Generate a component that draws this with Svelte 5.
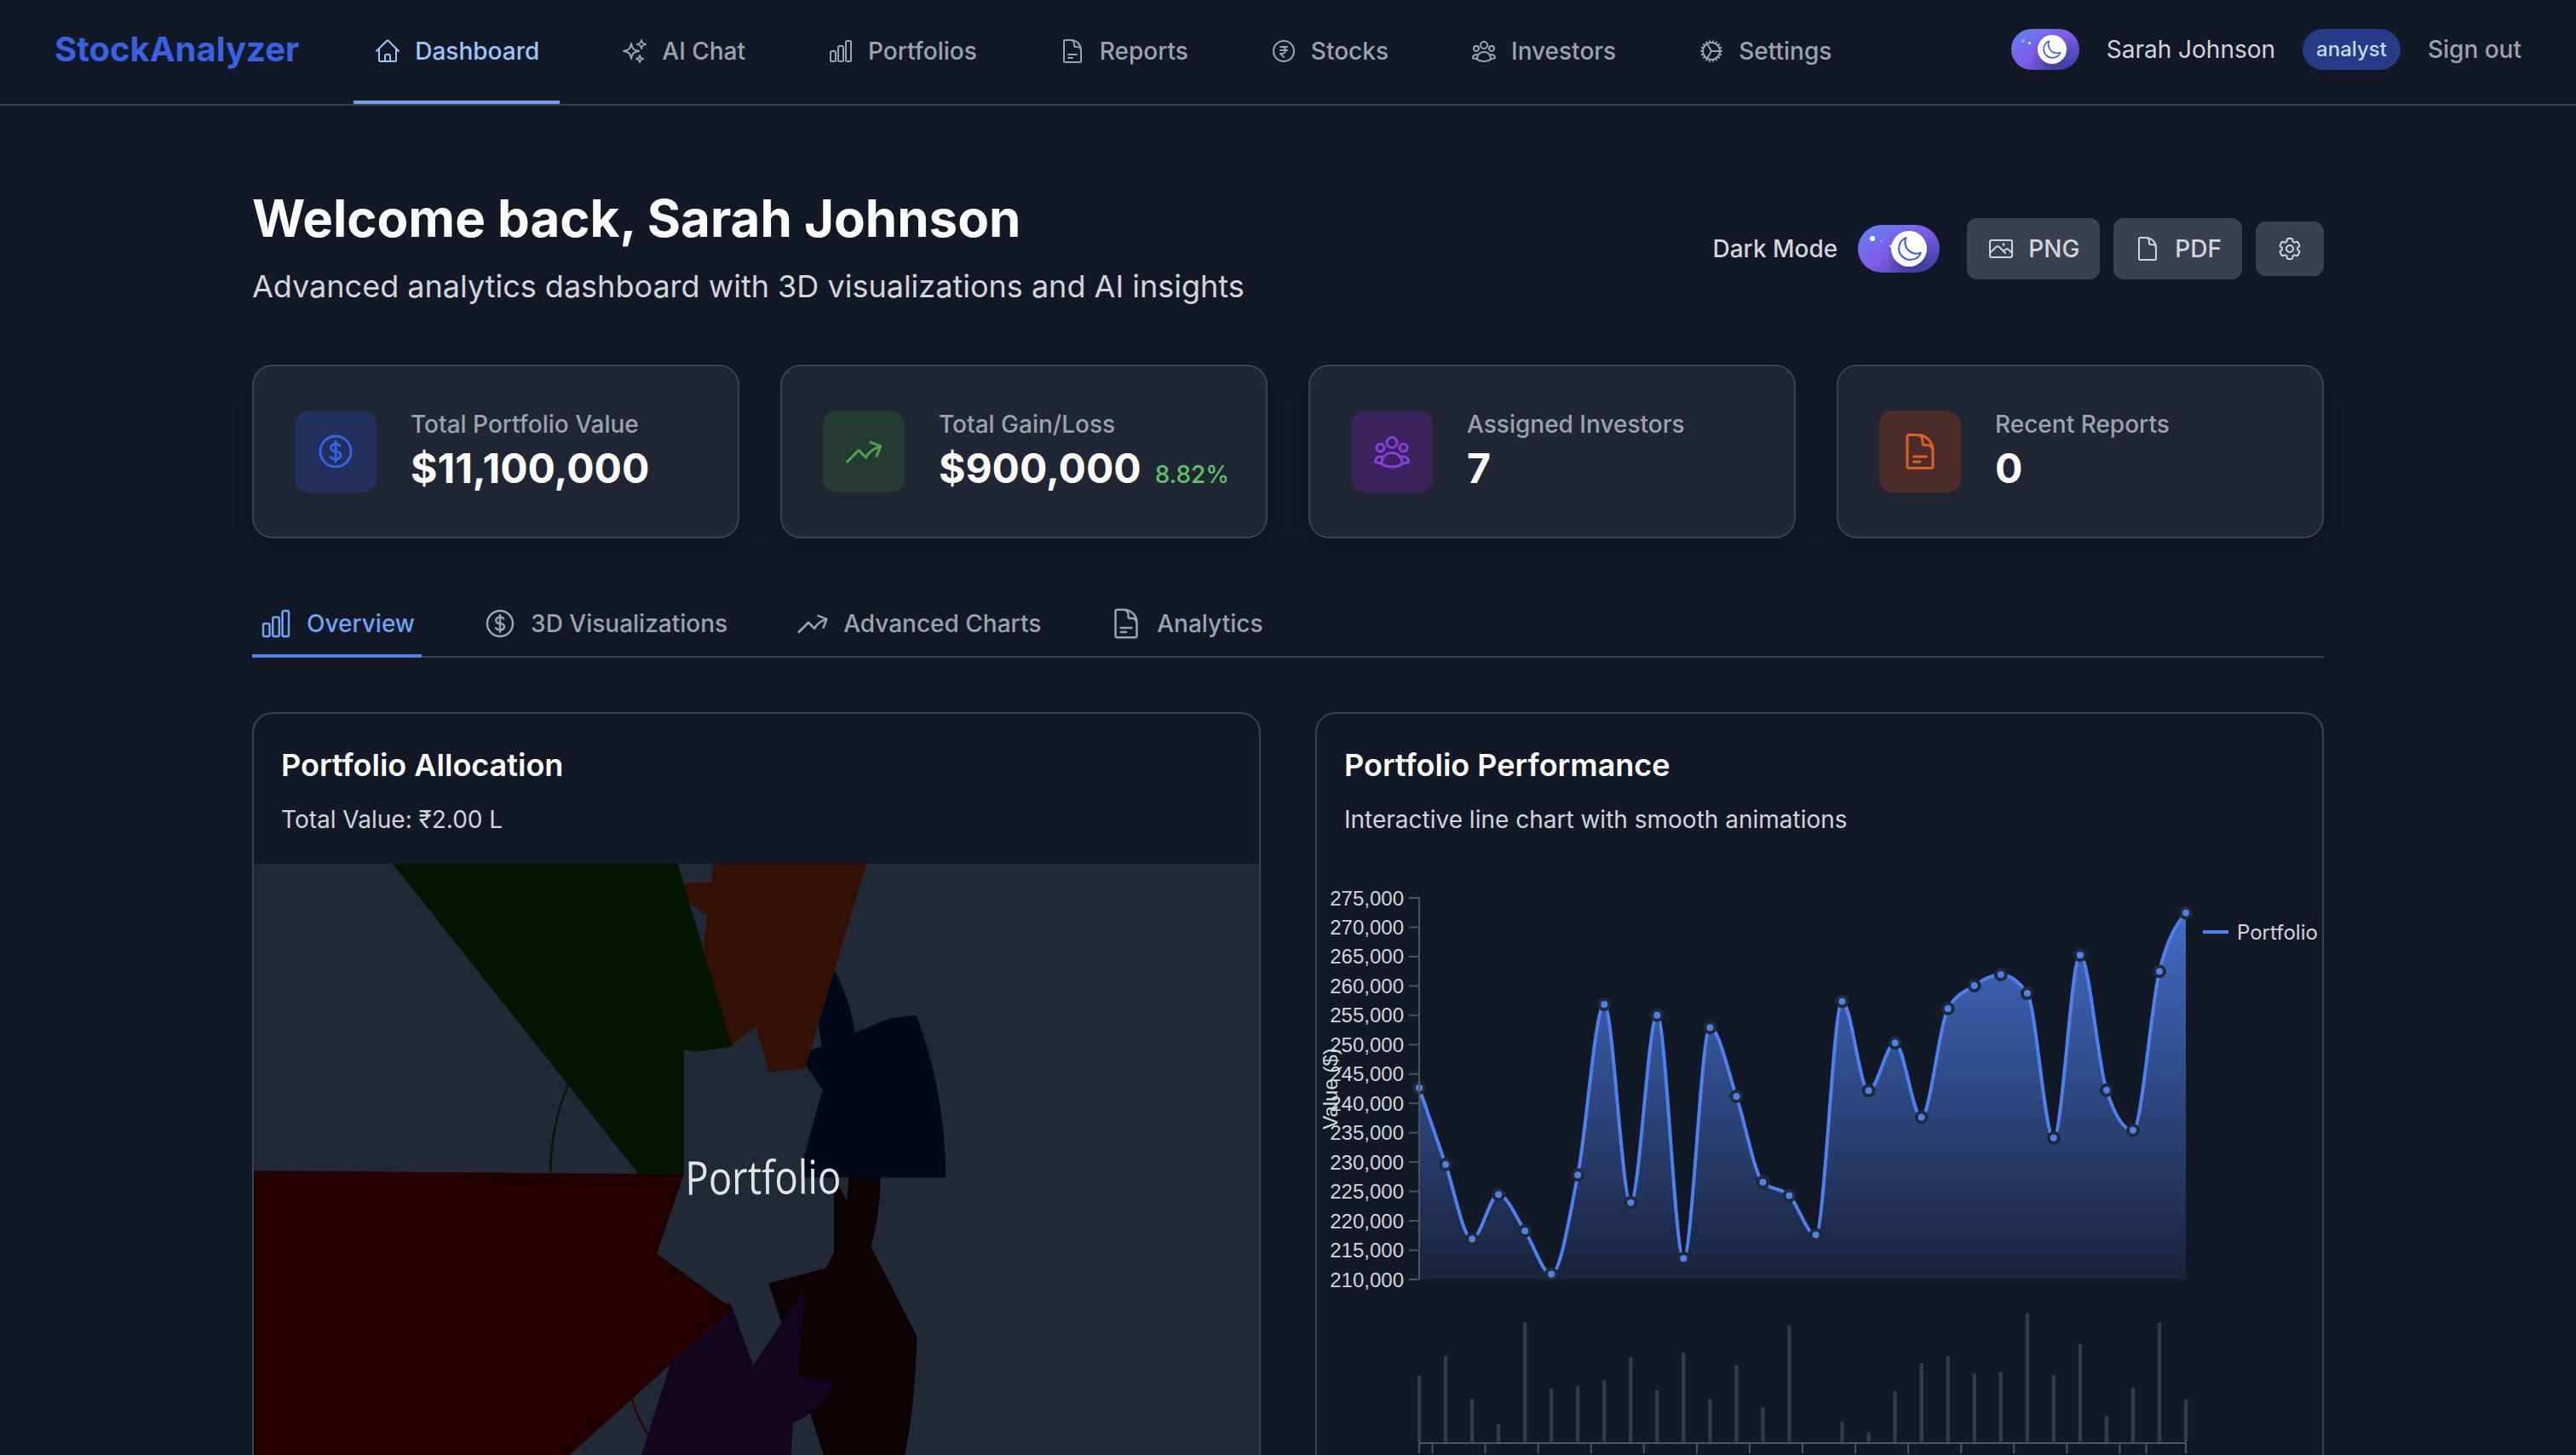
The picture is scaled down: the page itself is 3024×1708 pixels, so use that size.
<script>
  const paths = {
    home: 'm2.25 12 8.954-8.955c.44-.439 1.152-.439 1.591 0L21.75 12M4.5 9.75v10.125c0 .621.504 1.125 1.125 1.125H9.75v-4.875c0-.621.504-1.125 1.125-1.125h2.25c.621 0 1.125.504 1.125 1.125V21h4.125c.621 0 1.125-.504 1.125-1.125V9.75M8.25 21h8.25',
    sparkles: 'M9.813 15.904 9 18.75l-.813-2.846a4.5 4.5 0 0 0-3.09-3.09L2.25 12l2.846-.813a4.5 4.5 0 0 0 3.09-3.09L9 5.25l.813 2.846a4.5 4.5 0 0 0 3.09 3.09L15.75 12l-2.846.813a4.5 4.5 0 0 0-3.09 3.09ZM18.259 8.715 18 9.75l-.259-1.035a3.375 3.375 0 0 0-2.455-2.456L14.25 6l1.036-.259a3.375 3.375 0 0 0 2.455-2.456L18 2.25l.259 1.035a3.375 3.375 0 0 0 2.456 2.456L21.75 6l-1.035.259a3.375 3.375 0 0 0-2.456 2.456ZM16.894 20.567 16.5 21.75l-.394-1.183a2.25 2.25 0 0 0-1.423-1.423L13.5 18.75l1.183-.394a2.25 2.25 0 0 0 1.423-1.423l.394-1.183.394 1.183a2.25 2.25 0 0 0 1.423 1.423l1.183.394-1.183.394a2.25 2.25 0 0 0-1.423 1.423Z',
    bars: 'M3 13.125C3 12.504 3.504 12 4.125 12h2.25c.621 0 1.125.504 1.125 1.125v6.75C7.5 20.496 6.996 21 6.375 21h-2.25A1.125 1.125 0 0 1 3 19.875v-6.75ZM9.75 8.625c0-.621.504-1.125 1.125-1.125h2.25c.621 0 1.125.504 1.125 1.125v11.25c0 .621-.504 1.125-1.125 1.125h-2.25a1.125 1.125 0 0 1-1.125-1.125V8.625ZM16.5 4.125c0-.621.504-1.125 1.125-1.125h2.25C20.496 3 21 3.504 21 4.125v15.75c0 .621-.504 1.125-1.125 1.125h-2.25a1.125 1.125 0 0 1-1.125-1.125V4.125Z',
    docText: 'M19.5 14.25v-2.625a3.375 3.375 0 0 0-3.375-3.375h-1.5A1.125 1.125 0 0 1 13.5 7.125v-1.5a3.375 3.375 0 0 0-3.375-3.375H8.25m0 12.75h7.5m-7.5 3H12M10.5 2.25H5.625c-.621 0-1.125.504-1.125 1.125v17.25c0 .621.504 1.125 1.125 1.125h12.75c.621 0 1.125-.504 1.125-1.125V11.25a9 9 0 0 0-9-9Z',
    doc: 'M19.5 14.25v-2.625a3.375 3.375 0 0 0-3.375-3.375h-1.5A1.125 1.125 0 0 1 13.5 7.125v-1.5a3.375 3.375 0 0 0-3.375-3.375H8.25m2.25 0H5.625c-.621 0-1.125.504-1.125 1.125v17.25c0 .621.504 1.125 1.125 1.125h12.75c.621 0 1.125-.504 1.125-1.125V11.25a9 9 0 0 0-9-9Z',
    rupee: 'M15 8.25H9m6 3H9m3 6-3-3h1.5a3 3 0 1 0 0-6M21 12a9 9 0 1 1-18 0 9 9 0 0 1 18 0Z',
    dollar: 'M12 6v12m-3-2.818.879.659c1.171.879 3.07.879 4.242 0 1.172-.879 1.172-2.303 0-3.182C13.536 12.219 12.768 12 12 12c-.725 0-1.45-.22-2.003-.659-1.106-.879-1.106-2.303 0-3.182s2.9-.879 4.006 0l.415.33M21 12a9 9 0 1 1-18 0 9 9 0 0 1 18 0Z',
    group: 'M18 18.72a9.094 9.094 0 0 0 3.741-.479 3 3 0 0 0-4.682-2.72m.94 3.198.001.031c0 .225-.012.447-.037.666A11.944 11.944 0 0 1 12 21c-2.17 0-4.207-.576-5.963-1.584A6.062 6.062 0 0 1 6 18.719m12 0a5.971 5.971 0 0 0-.941-3.197m0 0A5.995 5.995 0 0 0 12 12.75a5.995 5.995 0 0 0-5.058 2.772m0 0a3 3 0 0 0-4.681 2.72 8.986 8.986 0 0 0 3.74.477m.94-3.197a5.971 5.971 0 0 0-.94 3.197M15 6.75a3 3 0 1 1-6 0 3 3 0 0 1 6 0Zm6 3a2.25 2.25 0 1 1-4.5 0 2.25 2.25 0 0 1 4.5 0Zm-13.5 0a2.25 2.25 0 1 1-4.5 0 2.25 2.25 0 0 1 4.5 0Z',
    cog: 'M4.5 12a7.5 7.5 0 0 0 15 0m-15 0a7.5 7.5 0 1 1 15 0m-15 0H3m16.5 0H21m-1.5 0H12m-8.457 3.077 1.41-.513m14.095-5.13 1.41-.513M5.106 17.785l1.15-.964m11.49-9.642 1.149-.964M7.501 19.795l.75-1.3m7.5-12.99.75-1.3m-6.063 16.658.26-1.477m2.605-14.772.26-1.477m0 17.726-.26-1.477M10.698 4.614l-.26-1.477M16.5 19.794l-.75-1.299M7.5 4.205 12 12m6.894 5.785-1.149-.964M6.256 7.178l-1.15-.964m15.352 8.864-1.41-.513M4.954 9.435l-1.41-.514M12.002 12l-3.75 6.495',
    gear: 'M9.594 3.94c.09-.542.56-.94 1.11-.94h2.593c.55 0 1.02.398 1.11.94l.213 1.281c.063.374.313.686.645.87.074.04.147.083.22.127.325.196.72.257 1.075.124l1.217-.456a1.125 1.125 0 0 1 1.37.49l1.296 2.247a1.125 1.125 0 0 1-.26 1.431l-1.003.827c-.293.241-.438.613-.43.992a7.723 7.723 0 0 1 0 .255c-.008.378.137.75.43.991l1.004.827c.424.35.534.955.26 1.43l-1.298 2.247a1.125 1.125 0 0 1-1.369.491l-1.217-.456c-.355-.133-.75-.072-1.076.124a6.47 6.47 0 0 1-.22.128c-.331.183-.581.495-.644.869l-.213 1.281c-.09.543-.56.94-1.11.94h-2.594c-.55 0-1.019-.398-1.11-.94l-.213-1.281c-.062-.374-.312-.686-.644-.87a6.52 6.52 0 0 1-.22-.127c-.325-.196-.72-.257-1.076-.124l-1.217.456a1.125 1.125 0 0 1-1.369-.49l-1.297-2.247a1.125 1.125 0 0 1 .26-1.431l1.004-.827c.292-.24.437-.613.43-.991a6.932 6.932 0 0 1 0-.255c.007-.38-.138-.751-.43-.992l-1.004-.827a1.125 1.125 0 0 1-.26-1.43l1.297-2.247a1.125 1.125 0 0 1 1.37-.491l1.216.456c.356.133.751.072 1.076-.124.072-.044.146-.086.22-.128.332-.183.582-.495.644-.869l.214-1.28ZM15 12a3 3 0 1 1-6 0 3 3 0 0 1 6 0Z',
    photo: 'm2.25 15.75 5.159-5.159a2.25 2.25 0 0 1 3.182 0l5.159 5.159m-1.5-1.5 1.409-1.409a2.25 2.25 0 0 1 3.182 0l2.909 2.909m-18 3.75h16.5a1.5 1.5 0 0 0 1.5-1.5V6a1.5 1.5 0 0 0-1.5-1.5H3.75A1.5 1.5 0 0 0 2.25 6v12a1.5 1.5 0 0 0 1.5 1.5Zm10.5-11.25h.008v.008h-.008V8.25Zm.375 0a.375.375 0 1 1-.75 0 .375.375 0 0 1 .75 0Z',
    trend: 'M2.25 18 9 11.25l4.306 4.306a11.95 11.95 0 0 1 5.814-5.518l2.74-1.22m0 0-5.94-2.281m5.94 2.28-2.28 5.941',
    moon: 'M21.752 15.002A9.72 9.72 0 0 1 18 15.75c-5.385 0-9.75-4.365-9.75-9.75 0-1.33.266-2.597.748-3.752A9.753 9.753 0 0 0 3 11.25C3 16.635 7.365 21 12.75 21a9.753 9.753 0 0 0 9.002-5.998Z'
  };

  const nav = [
    ['Dashboard', 'home'], ['AI Chat', 'sparkles'], ['Portfolios', 'bars'], ['Reports', 'docText'],
    ['Stocks', 'rupee'], ['Investors', 'group'], ['Settings', 'cog']
  ];
  const stats = [
    { label: 'Total Portfolio Value', value: '$11,100,000', icon: 'dollar', tone: 'blue' },
    { label: 'Total Gain/Loss', value: '$900,000', delta: '8.82%', icon: 'trend', tone: 'green' },
    { label: 'Assigned Investors', value: '7', icon: 'group', tone: 'purple' },
    { label: 'Recent Reports', value: '0', icon: 'docText', tone: 'orange' }
  ];
  const tabs = [
    ['Overview', 'bars'], ['3D Visualizations', 'dollar'], ['Advanced Charts', 'trend'], ['Analytics', 'docText']
  ];

  // Performance chart geometry
  const left = 120, right = 1020, top = 40, bottom = 488, floor = 680;
  const values = [
    242630, 229590, 216880, 224480, 218260, 210920, 227820, 256850, 223100, 255020,
    213600, 252920, 241190, 226580, 224280, 217600, 257370, 242170, 250300, 237650,
    256130, 260060, 261960, 258750, 234110, 265240, 242240, 235420, 262485, 272445
  ];
  const volumes = [
    78, 101.6, 51, 21, 141, 63, 66, 72.7, 99.8, 61.4, 104.8, 51, 90.8, 41, 136.8, 0, 24, 11.7, 60,
    92.6, 101, 80.4, 82.6, 151.3, 79, 115.6, 30.7, 63.7, 140, 50.6
  ];
  const step = (right - left) / (values.length - 1);
  const yOf = (v) => top + ((275000 - v) / 65000) * (bottom - top);
  const pts = values.map((v, i) => [left + i * step, yOf(v)]);
  const yTicks = Array.from({ length: 14 }, (_, i) => 275000 - i * 5000);
  const xTicks = [0, ...Array.from({ length: 14 }, (_, k) => 0.5 + 2 * k), 27.5, 29].map((i) => left + i * step);

  // Monotone cubic interpolation through evenly spaced points
  function monotonePath(p) {
    const n = p.length;
    const s = [];
    const m = [];
    for (let i = 0; i < n - 1; i++) s.push((p[i + 1][1] - p[i][1]) / step);
    for (let i = 1; i < n - 1; i++) {
      const a = s[i - 1];
      const b = s[i];
      m[i] = (Math.sign(a) + Math.sign(b)) * Math.min(Math.abs(a), Math.abs(b), Math.abs(a + b) / 4);
    }
    m[0] = (3 * s[0] - m[1]) / 2;
    m[n - 1] = (3 * s[n - 2] - m[n - 2]) / 2;
    let d = `M${p[0][0]} ${p[0][1]}`;
    for (let i = 0; i < n - 1; i++) {
      const [x0, y0] = p[i];
      const [x1, y1] = p[i + 1];
      const h = step / 3;
      d += `C${x0 + h} ${y0 + m[i] * h} ${x1 - h} ${y1 - m[i + 1] * h} ${x1} ${y1}`;
    }
    return d;
  }
  const line = monotonePath(pts);
  const area = `${line}L${right} ${bottom}L${left} ${bottom}Z`;
</script>

{#snippet icon(name)}
  <svg class="icon" viewBox="0 0 24 24" aria-hidden="true"><path d={paths[name]} /></svg>
{/snippet}

<div class="page">
  <header>
    <div class="logo">StockAnalyzer</div>
    <nav>
      {#each nav as [label, name], i}
        <a class:active={i === 0}>{@render icon(name)}<span>{label}</span></a>
      {/each}
    </nav>
    <div class="account">
      <div class="toggle small">
        <i class="star s1"></i><i class="star s2"></i>
        <div class="knob">{@render icon('moon')}</div>
      </div>
      <span class="name">Sarah Johnson</span>
      <span class="role">analyst</span>
      <span class="signout">Sign out</span>
    </div>
  </header>

  <main>
    <section class="intro">
      <div>
        <h1>Welcome back, Sarah Johnson</h1>
        <p>Advanced analytics dashboard with 3D visualizations and AI insights</p>
      </div>
      <div class="actions">
        <span class="mode">Dark Mode</span>
        <div class="toggle">
          <i class="star s1"></i><i class="star s2"></i><i class="star s3"></i>
          <div class="knob">{@render icon('moon')}</div>
        </div>
        <div class="buttons">
          <button>{@render icon('photo')}PNG</button>
          <button>{@render icon('doc')}PDF</button>
          <button aria-label="Options">{@render icon('gear')}</button>
        </div>
      </div>
    </section>

    <section class="stats">
      {#each stats as s}
        <div class="stat">
          <div class="badge {s.tone}">{@render icon(s.icon)}</div>
          <div>
            <div class="label">{s.label}</div>
            <div class="value">{s.value}{#if s.delta}<span>{s.delta}</span>{/if}</div>
          </div>
        </div>
      {/each}
    </section>

    <div class="tabs">
      {#each tabs as [label, name], i}
        <div class="tab" class:active={i === 0}>{@render icon(name)}{label}</div>
      {/each}
    </div>

    <section class="charts">
      <article>
        <div class="head">
          <h2>Portfolio Allocation</h2>
          <p>Total Value: ₹2.00 L</p>
        </div>
        <svg class="scene" width="1180" height="694" viewBox="0 0 1180 694">
          <g transform="scale(.7908 .5791) translate(-22.8 -370)">
            <path fill="#000917" d="M884 585Q907 640 915 712L968 683 1006 677Q1049 830 1050 1006H837L834 990 867 828 842 778 849 748 866 740 861 695Z" />
            <path fill="#331004" d="M705 370H932L841 785 788 793 768 700 730 738 690 540 696 475 665 446 660 412Q680 404 702 409Z" />
            <path fill="#041502" d="M229 370H652L733 741 679 751 661 747V999H594Z" />
            <path class="arc" stroke="#041502" d="M489 818Q464 900 463 996" />
            <path fill="#0d0303" d="M906 1006H953Q953 1080 939 1146L1007 1328Q1005 1460 989 1570H869L787 1220 872 1190 884 1158V1006L903 1052Z" />
            <path fill="#120520" d="M841 1230 831 1409 884 1423Q862 1485 823 1502L820 1570H598L641 1385 722 1262H731L764 1387Z" />
            <path fill="#220001" d="M20 992 661 999 621 1160 733 1272 490 1570H20Z" />
            <path class="arc" stroke="#330302" d="M584 1455Q597 1520 634 1568" />
          </g>
          <text class="scene-label" x="506.5" y="388.5" textLength="183" lengthAdjust="spacingAndGlyphs" transform="rotate(-.5 508 388)">Portfolio</text>
        </svg>
      </article>

      <article>
        <div class="head">
          <h2>Portfolio Performance</h2>
          <p>Interactive line chart with smooth animations</p>
        </div>
        <svg width="1180" height="694" viewBox="0 0 1180 694">
          <defs>
            <linearGradient id="fade" x1="0" y1="0" x2="0" y2="1">
              <stop offset="0" stop-color="#4f81ee" stop-opacity=".8" />
              <stop offset="1" stop-color="#4f81ee" stop-opacity=".1" />
            </linearGradient>
          </defs>
          <path d={area} fill="url(#fade)" />
          {#each volumes as h, i}
            <rect class="volume" x={left + i * step - 2.2} y={floor - 1 - h} width="4.4" height={h} />
          {/each}
          <path class="line" d={line} />
          {#each pts as [x, y]}
            <circle class="dot" cx={x} cy={y} r="6" />
          {/each}
          <path class="axis" d="M{left} {top - 1}V{bottom + 1}M{left} {floor}H{right}" />
          {#each yTicks as t}
            <path class="axis" d="M{left - 12} {yOf(t)}H{left}" />
            <text class="tick" x="102" y={yOf(t) + 8.5}>{t.toLocaleString('en-US')}</text>
          {/each}
          {#each xTicks as x}
            <path class="axis" d="M{x} {floor}V{floor + 12}" />
          {/each}
          <text class="axis-name" transform="translate(24 264) rotate(-90)">Value ($)</text>
          <path class="line" d="M1040 80H1070" />
          <text class="legend" x="1080" y="88.5">Portfolio</text>
        </svg>
      </article>
    </section>
  </main>
</div>

<style>
  :global(body) { background: #121826; }
  .page {
    height: 1708px;
    overflow: hidden;
    background: #121826;
    color: #fff;
    font-family: Inter, sans-serif;
    font-size: 28px;
    line-height: 40px;
  }
  h1, h2, p { margin: 0; }
  .icon {
    width: 32px;
    height: 32px;
    flex: none;
    fill: none;
    stroke: currentColor;
    stroke-width: 1.5;
    stroke-linecap: round;
    stroke-linejoin: round;
  }

  header {
    display: flex;
    height: 122px;
    padding: 0 64px;
    border-bottom: 2px solid #3a4150;
  }
  .logo {
    margin-right: 64px;
    line-height: 116px;
    font-size: 40px;
    font-weight: 700;
    color: #3662e3;
  }
  nav { display: flex; gap: 48px; }
  nav a {
    display: flex;
    align-items: center;
    gap: 16px;
    padding: 2px 24px 0;
    border-bottom: 4px solid transparent;
    font-weight: 500;
    color: #9da3ae;
  }
  nav a.active { color: #9cc5fa; border-color: #70a3f3; }
  .account {
    display: flex;
    align-items: center;
    gap: 32px;
    height: 116px;
    margin-left: auto;
  }
  .name { color: #d2d5da; }
  .role {
    padding: 8px 16px;
    border-radius: 24px;
    background: #263a85;
    line-height: 32px;
    font-size: 24px;
    font-weight: 500;
    color: #c5dbfb;
  }
  .signout { font-weight: 500; color: #9da3ae; }

  .toggle {
    position: relative;
    display: flex;
    align-items: center;
    justify-content: flex-end;
    box-sizing: border-box;
    width: 96px;
    height: 56px;
    padding-right: 15px;
    border-radius: 28px;
    background: linear-gradient(to bottom right, #5b87f0, #825ce8 50%, #313ea0);
  }
  .knob {
    display: flex;
    align-items: center;
    justify-content: center;
    width: 42px;
    height: 42px;
    border-radius: 50%;
    background: #fff;
    color: #3662e3;
    box-shadow: 0 10px 15px rgba(0, 0, 0, .14), 0 4px 8px rgba(0, 0, 0, .14);
  }
  .knob .icon { width: 33px; height: 33px; }
  .toggle.small { width: 80px; height: 48px; border-radius: 24px; }
  .small .knob { width: 34px; height: 34px; }
  .small .icon { width: 25px; height: 25px; }
  .star { position: absolute; border-radius: 50%; background: #fff; }
  .s1 { left: 14px; top: 13px; width: 6px; height: 6px; }
  .s2 { left: 26px; top: 18px; width: 2px; height: 2px; opacity: .5; }
  .s3 { left: 37px; top: 23px; width: 4px; height: 4px; opacity: .7; }
  .small .s1 { left: 12px; top: 12px; width: 4px; height: 4px; opacity: .35; }
  .small .s2 { left: 20px; top: 15px; width: 3px; height: 3px; opacity: .9; }

  main { width: 2432px; margin: 0 auto; padding-top: 96px; }
  .intro { display: flex; justify-content: space-between; align-items: center; }
  h1 { font-size: 60px; line-height: 72px; font-weight: 700; }
  .intro p { margin-top: 16px; font-size: 36px; line-height: 56px; color: #d2d5da; }
  .actions { display: flex; align-items: center; }
  .mode { margin-right: 24px; font-weight: 500; color: #d2d5da; }
  .buttons { display: flex; align-items: center; gap: 16px; margin-left: 32px; }
  button {
    display: flex;
    align-items: center;
    gap: 16px;
    padding: 16px 24px;
    border: 0;
    border-radius: 12px;
    background: #3a4150;
    font: inherit;
    font-weight: 500;
    color: #d2d5da;
  }

  .stats { display: grid; grid-template-columns: repeat(4, minmax(0, 1fr)); gap: 48px; margin-top: 64px; }
  .stat {
    display: flex;
    align-items: center;
    gap: 40px;
    padding: 48px;
    border: 2px solid #3a4150;
    border-radius: 24px;
    background: #202633;
    box-shadow: 0 20px 30px -6px rgba(0, 0, 0, .1), 0 8px 12px -4px rgba(0, 0, 0, .1);
  }
  .badge { display: flex; padding: 24px; border-radius: 16px; }
  .badge .icon { width: 48px; height: 48px; }
  .blue { background: #22305e; color: #3662e3; }
  .green { background: #233b31; color: #4ea250; }
  .purple { background: #3a235a; color: #8a3ee2; }
  .orange { background: #4b2c28; color: #d96127; }
  .label { font-weight: 500; color: #9da3ae; }
  .value {
    display: flex;
    align-items: baseline;
    height: 64px;
    font-size: 48px;
    line-height: 64px;
    font-weight: 700;
    white-space: nowrap;
  }
  .value span { margin-left: 16px; line-height: 40px; font-size: 28px; font-weight: 500; color: #61c16c; }

  .tabs { display: flex; gap: 64px; margin-top: 64px; border-bottom: 2px solid #3a4150; }
  .tab {
    display: flex;
    gap: 16px;
    margin-bottom: -2px;
    padding: 16px 8px;
    border-bottom: 4px solid transparent;
    font-weight: 500;
    color: #9da3ae;
  }
  .tab.active { color: #70a3f3; border-color: #4f81ee; }
  .tab .icon { width: 40px; height: 40px; }

  .charts { display: grid; grid-template-columns: 1fr 1fr; gap: 64px; margin-top: 64px; }
  article {
    height: 1000px;
    border: 2px solid #3a4150;
    border-radius: 24px;
    overflow: hidden;
  }
  article > svg { display: block; }
  .head { padding: 32px; }
  h2 { font-size: 36px; line-height: 56px; font-weight: 600; }
  .head p { margin-top: 16px; color: #d2d5da; }
  .scene { background: #212936; }
  .arc { fill: none; stroke-width: 3; }
  .scene-label { font-family: 'Open Sans', sans-serif; font-size: 54.5px; fill: #e2e3e3; }

  .volume { fill: #343a47; }
  .line { fill: none; stroke: #4f81ee; stroke-width: 4; stroke-linejoin: bevel; }
  .dot { fill: #4f81ee; stroke: #202936; stroke-width: 4; }
  .axis { fill: none; stroke: #4d5461; stroke-width: 2; }
  .tick, .axis-name { font-family: 'Liberation Sans', sans-serif; font-size: 24px; fill: #d2d5da; }
  .tick { text-anchor: end; }
  .axis-name { text-anchor: middle; }
  .legend { font-size: 24px; fill: #d2d5da; }
</style>
